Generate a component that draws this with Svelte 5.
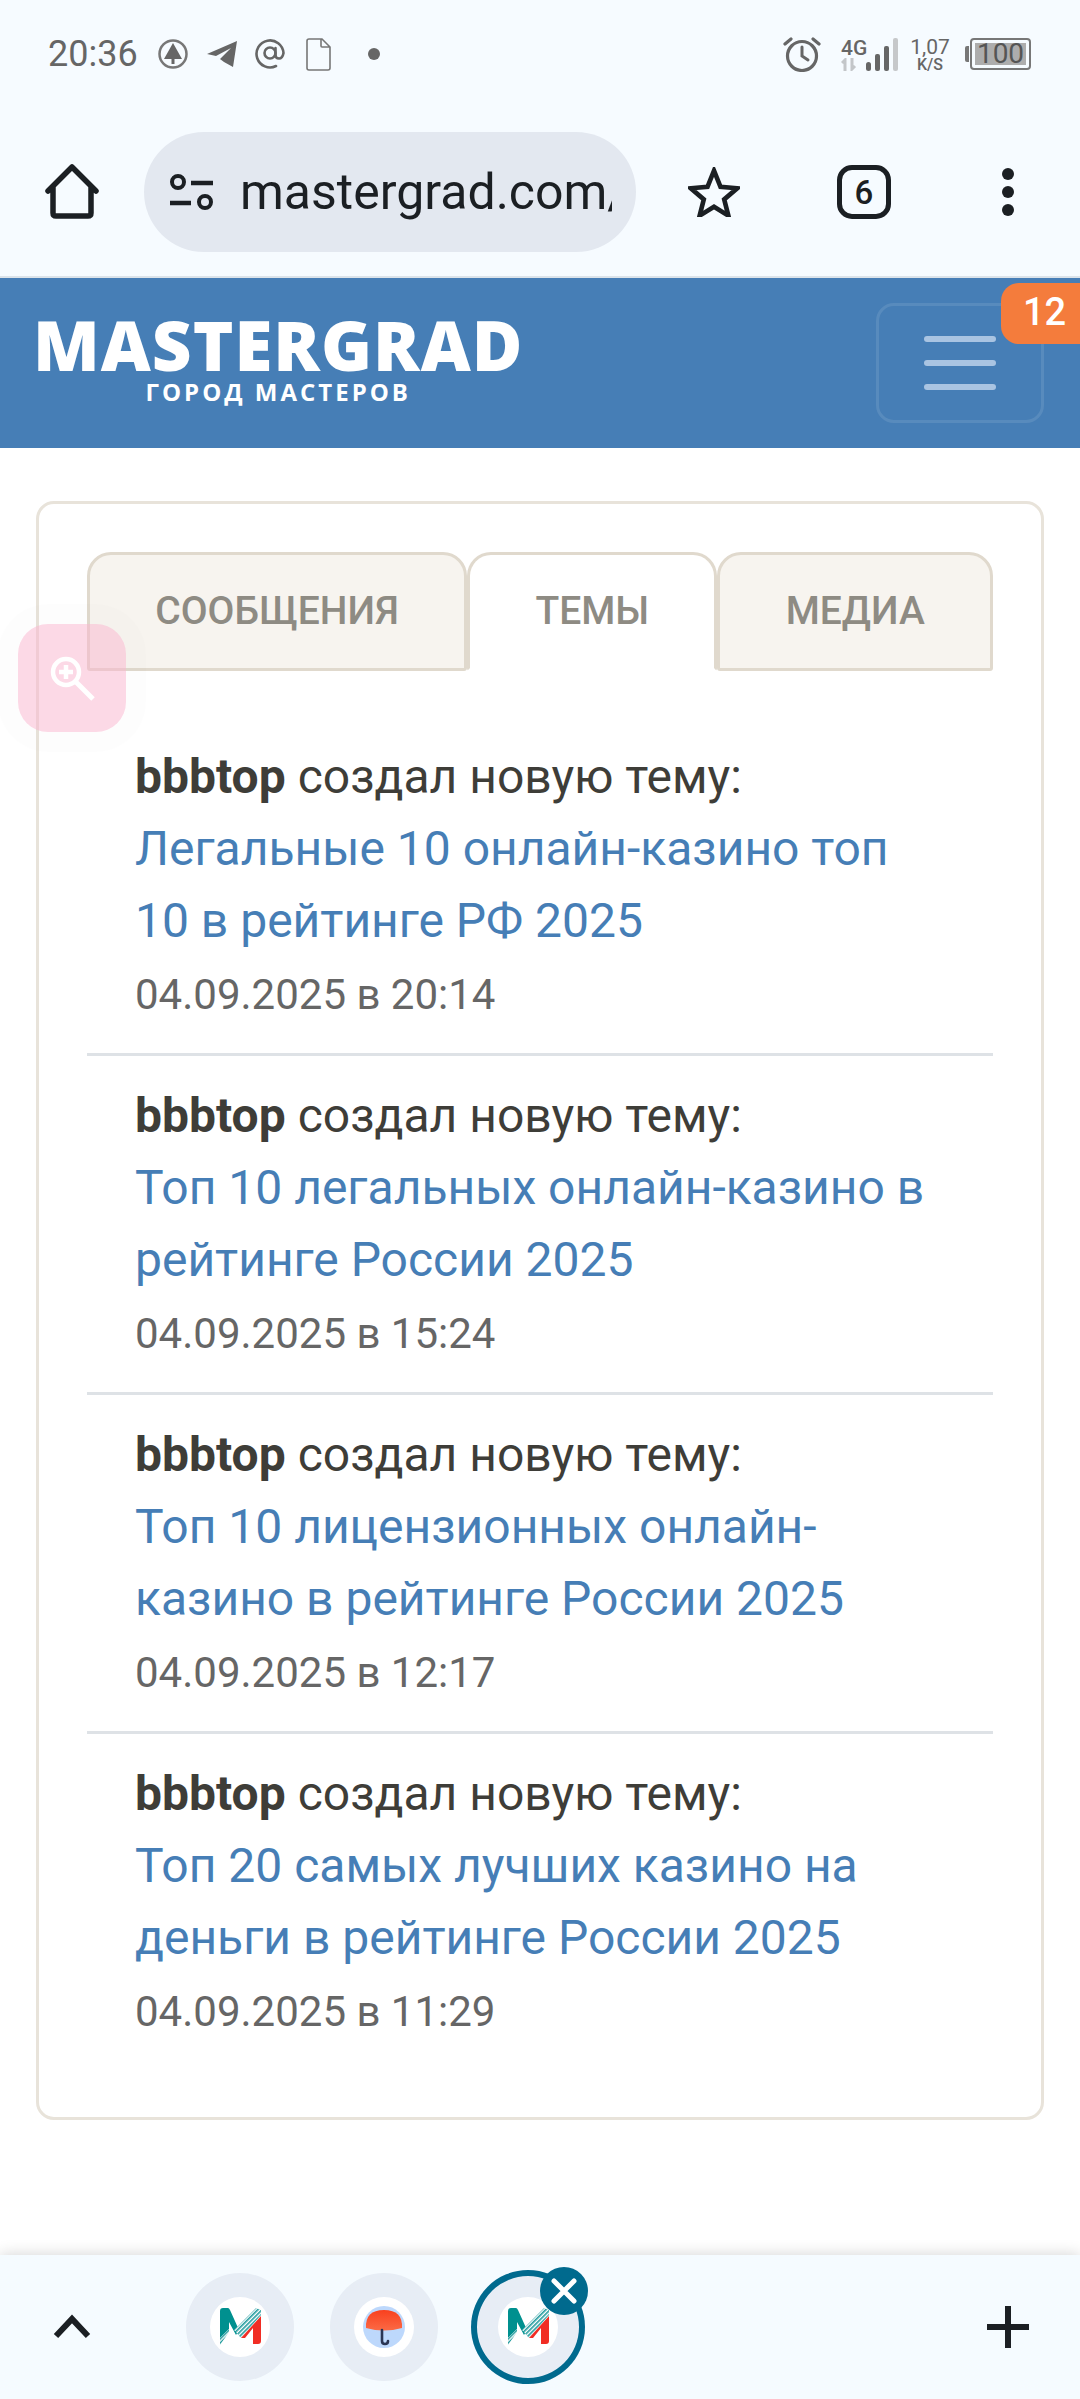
<script>
  const tabs = [
    { label: 'СООБЩЕНИЯ', active: false },
    { label: 'ТЕМЫ', active: true },
    { label: 'МЕДИА', active: false }
  ];

  const topics = [
    { title: 'Легальные 10 онлайн-казино топ 10 в рейтинге РФ 2025', date: '04.09.2025 в 20:14' },
    { title: 'Топ 10 легальных онлайн-казино в рейтинге России 2025', date: '04.09.2025 в 15:24' },
    { title: 'Топ 10 лицензионных онлайн-казино в рейтинге России 2025', date: '04.09.2025 в 12:17' },
    { title: 'Топ 20 самых лучших казино на деньги в рейтинге России 2025', date: '04.09.2025 в 11:29' }
  ];
</script>

{#snippet mLogo()}
  <svg class="favicon" viewBox="0 0 60 60">
    <defs>
      <pattern id="hatch" width="3" height="3" patternUnits="userSpaceOnUse" patternTransform="rotate(-45)">
        <rect width="3" height="3" fill="#fff" />
        <rect width="3" height="1.6" fill="#1f9a9c" />
      </pattern>
    </defs>
    <path d="M10 14q0-3 3-3h5q1 0 2 2l9 20-3 5-7-13v7l-9 9z" fill="#00908f" />
    <path d="M10 41l9-9v3l-9 13z" fill="url(#hatch)" />
    <path d="M24 33L46 11l5 2v5L31 41z" fill="url(#hatch)" />
    <path d="M31 41l20-22v25q0 3-3 3h-5V31l-8 10z" fill="#f12d24" />
  </svg>
{/snippet}

<div class="page">
  <header class="chrome">
    <div class="status">
      <span class="time">20:36</span>
      <svg class="st" width="30" height="30" viewBox="0 0 30 30">
        <circle cx="15" cy="15" r="13.5" fill="none" stroke="#777" stroke-width="2.5" />
        <path d="M15 4l9 16h-7.5v5h-3v-5H6z" fill="#666" />
      </svg>
      <svg class="st plane" width="32" height="28" viewBox="0 0 32 28">
        <path d="M1 14L31 1l-4 26-9-5-4-3 11-11-15 8z" fill="#666" />
      </svg>
      <svg class="st at" width="32" height="32" viewBox="0 0 32 32">
        <circle cx="16" cy="15" r="5.5" fill="none" stroke="#666" stroke-width="2.6" />
        <path d="M21.5 10v7q0 3.500 3.500 3.500t4.500-5.500A13.500 13.500 0 1 0 22 28" fill="none" stroke="#666" stroke-width="2.6" stroke-linecap="round" />
      </svg>
      <svg class="st doc" width="26" height="33" viewBox="0 0 26 33">
        <path d="M2 3q0-2 2-2h13l8 8v21q0 2-2 2H4q-2 0-2-2zM16 1v7q0 1 1 1h8" fill="none" stroke="#777" stroke-width="1.6" />
      </svg>
      <span class="dot"></span>

      <div class="st-right">
        <svg width="38" height="36" viewBox="0 0 38 36">
          <circle cx="19" cy="20" r="14.500" fill="none" stroke="#666" stroke-width="3.200" />
          <path d="M19 11v9l6 4" fill="none" stroke="#666" stroke-width="3" stroke-linecap="round" />
          <path d="M2 8l6-5M36 8l-6-5" stroke="#666" stroke-width="3.200" stroke-linecap="round" />
        </svg>
        <div class="net">
          <span class="net-top">4G</span>
          <svg width="16" height="13" viewBox="0 0 16 13">
            <path d="M4 13V2L1 5M11 0v11l3-3" fill="none" stroke="#c3c6c9" stroke-width="3" />
          </svg>
        </div>
        <svg class="bars" width="33" height="33" viewBox="0 0 33 33">
          <rect x="0" y="24" width="5" height="9" rx="2.500" fill="#666" />
          <rect x="9" y="16" width="5" height="17" rx="2" fill="#666" />
          <rect x="18" y="8" width="5" height="25" rx="2" fill="#666" />
          <rect x="27" y="0" width="5" height="33" rx="2" fill="#c6c8ca" />
        </svg>
        <div class="speed">
          <span class="speed-n">1,07</span>
          <span class="speed-u">K/S</span>
        </div>
        <div class="battery">
          <span class="batt-cap"></span>
          <span class="batt-body"><span class="batt-fill">100</span></span>
        </div>
      </div>
    </div>

    <div class="toolbar">
      <button class="tool home" aria-label="Домой">
        <svg width="56" height="58" viewBox="0 0 56 58">
          <path d="M4 28L28 4l24 24M9 24v26q0 3 3 3h32q3 0 3-3V24" fill="none" stroke="#1b1f23" stroke-width="5.500" stroke-linecap="round" stroke-linejoin="round" />
        </svg>
      </button>
      <div class="url">
        <svg width="46" height="36" viewBox="0 0 46 36">
          <circle cx="9" cy="8" r="6" fill="none" stroke="#1b1f23" stroke-width="4" />
          <path d="M22 9h22M1 29h21" stroke="#1b1f23" stroke-width="4.500" />
          <circle cx="36" cy="28" r="6" fill="none" stroke="#1b1f23" stroke-width="4" />
        </svg>
        <span class="url-text">mastergrad.com/forums/</span>
      </div>
      <button class="tool star" aria-label="В закладки">
        <svg width="52" height="50" viewBox="0 0 56 54">
          <path d="M28 4l7 17.500 18 1.500-14 12 4.500 17.500L28 43 12.500 52.500 17 35 3 23l18-1.500z" fill="none" stroke="#1b1f23" stroke-width="5" />
        </svg>
      </button>
      <button class="tool" aria-label="Вкладки">
        <span class="tab-count">6</span>
      </button>
      <button class="tool dots" aria-label="Меню">
        <i></i><i></i><i></i>
      </button>
    </div>
  </header>

  <div class="site-head">
    <div class="logo">
      <span class="logo-main">MASTERGRAD</span>
      <span class="logo-sub">ГОРОД МАСТЕРОВ</span>
    </div>
    <button class="burger" aria-label="Меню сайта">
      <i></i><i></i><i></i>
    </button>
    <span class="badge">12</span>
  </div>

  <main class="content">
    <section class="card">
      <div class="tabs">
        {#each tabs as tab}
          <button class="tab" class:active={tab.active}>{tab.label}</button>
        {/each}
      </div>
      <ul class="topics">
        {#each topics as topic}
          <li class="topic">
            <div><b>bbbtop</b> создал новую тему:</div>
            <a href="#top">{topic.title}</a>
            <div class="date">{topic.date}</div>
          </li>
        {/each}
      </ul>
    </section>
  </main>

  <div class="zoom-btn">
    <svg width="54" height="54" viewBox="0 0 54 54">
      <circle cx="19" cy="19" r="13" fill="none" stroke="#fff" stroke-width="4.500" />
      <path d="M19 12v14M12 19h14" stroke="#fff" stroke-width="4.500" />
      <path d="M29 29l17 17" stroke="#fff" stroke-width="5" />
    </svg>
  </div>

  <footer class="tabbar">
    <button class="chev" aria-label="Развернуть">
      <svg width="38" height="26" viewBox="0 0 38 26">
        <path d="M3 22L19 5l16 17" fill="none" stroke="#1b1f23" stroke-width="6" />
      </svg>
    </button>
    <div class="group">
      <div class="ring"><div class="fav">{@render mLogo()}</div></div>
      <div class="ring">
        <div class="fav">
          <svg class="favicon" viewBox="0 0 60 60">
            <defs>
              <linearGradient id="dome" x1="0" y1="0" x2="0" y2="1">
                <stop offset="0" stop-color="#f9401e" />
                <stop offset="1" stop-color="#fb6a45" />
              </linearGradient>
            </defs>
            <circle cx="30" cy="30" r="21" fill="#bdd8fc" />
            <path d="M12 31Q11 13 30 13T48 31Q30 36 12 31z" fill="url(#dome)" />
            <path d="M28 33v11q0 3 3 3t3-3" fill="none" stroke="#2a3554" stroke-width="2.600" stroke-linecap="round" />
          </svg>
        </div>
      </div>
      <div class="ring current">
        <div class="fav">{@render mLogo()}</div>
        <span class="close">
          <svg width="28" height="28" viewBox="0 0 28 28">
            <path d="M4 4l20 20M24 4L4 24" stroke="#fff" stroke-width="5" stroke-linecap="round" />
          </svg>
        </span>
      </div>
    </div>
    <button class="plus" aria-label="Новая вкладка">
      <svg width="42" height="42" viewBox="0 0 42 42">
        <path d="M21 0v42M0 21h42" stroke="#1b1f23" stroke-width="6" />
      </svg>
    </button>
  </footer>
</div>

<style>
  :global(body) {
    margin: 0;
    background: #fff;
  }

  .page {
    position: relative;
    width: 1080px;
    height: 2399px;
    display: flex;
    flex-direction: column;
    overflow: hidden;
    font-family: Roboto, sans-serif;
  }

  button {
    border: 0;
    background: none;
    padding: 0;
    font-family: inherit;
  }

  /* browser chrome */
  .chrome {
    height: 278px;
    background: #f6fbff;
    border-bottom: 2px solid #dbe3ea;
    box-sizing: border-box;
  }

  .status {
    height: 132px;
    padding: 0 49px 24px 48px;
    box-sizing: border-box;
    display: flex;
    align-items: center;
    color: #666;
  }

  .time {
    font-size: 36px;
    width: 110px;
  }

  .st {
    flex: none;
  }

  .plane {
    margin-left: 18px;
  }

  .at {
    margin-left: 16px;
  }

  .doc {
    margin-left: 19px;
  }

  .dot {
    width: 12px;
    height: 12px;
    margin-left: 37px;
    border-radius: 50%;
    background: #666;
  }

  .st-right {
    margin-left: auto;
    display: flex;
    align-items: center;
  }

  .net {
    width: 25px;
    margin-left: 20px;
    display: flex;
    flex-direction: column;
  }

  .net-top {
    font-size: 21px;
    font-weight: 500;
    line-height: 20px;
  }

  .bars {
    margin: 0;
  }

  .speed {
    width: 38px;
    margin-left: 12px;
    display: flex;
    flex-direction: column;
    align-items: center;
    color: #666;
  }

  .speed-n {
    font-size: 21px;
    line-height: 20px;
  }

  .speed-u {
    font-size: 16px;
    line-height: 15px;
    font-weight: 500;
  }

  .battery {
    margin-left: 16px;
    display: flex;
    align-items: center;
  }

  .batt-cap {
    width: 4px;
    height: 16px;
    background: #777;
    border-radius: 2px 0 0 2px;
  }

  .batt-body {
    width: 61px;
    height: 32px;
    margin-left: 1px;
    border: 2px solid #777;
    border-radius: 4px;
    box-sizing: border-box;
    padding: 3px;
    display: flex;
  }

  .batt-fill {
    flex: 1;
    background: #adadad;
    color: #555;
    font-size: 28px;
    line-height: 22px;
    text-align: center;
  }

  .toolbar {
    height: 120px;
    display: flex;
    align-items: center;
  }

  .tool {
    width: 144px;
    height: 120px;
    flex: none;
    display: flex;
    align-items: center;
    justify-content: center;
  }

  .tool.star {
    width: 156px;
  }

  .url {
    width: 492px;
    height: 120px;
    flex: none;
    box-sizing: border-box;
    padding: 0 24px 0 25px;
    border-radius: 60px;
    background: #e3e8f0;
    display: flex;
    align-items: center;
    gap: 25px;
    overflow: hidden;
  }

  .url svg {
    flex: none;
  }

  .url-text {
    font-size: 50px;
    color: #1b1f23;
    white-space: nowrap;
    overflow: hidden;
  }

  .tab-count {
    width: 54px;
    height: 54px;
    box-sizing: border-box;
    border: 5.500px solid #1b1f23;
    border-radius: 15px;
    display: flex;
    align-items: center;
    justify-content: center;
    color: #1b1f23;
    font-size: 33px;
    font-weight: 500;
  }

  .dots {
    flex-direction: column;
    gap: 6px;
  }

  .dots i {
    width: 12px;
    height: 12px;
    border-radius: 50%;
    background: #1b1f23;
  }

  /* site header */
  .site-head {
    position: relative;
    height: 170px;
    background: #467eb6;
    display: flex;
    align-items: center;
    justify-content: space-between;
    padding: 0 36px 0 33px;
    box-sizing: border-box;
  }

  .logo {
    display: flex;
    flex-direction: column;
    align-items: center;
    color: #fff;
    font-family: 'Open Sans', sans-serif;
    margin-bottom: 10px;
  }

  .logo-main {
    font-size: 69px;
    font-weight: 800;
    line-height: 66px;
    letter-spacing: 1px;
  }

  .logo-sub {
    font-size: 24px;
    font-weight: 700;
    line-height: 29px;
    letter-spacing: 3px;
  }

  .burger {
    width: 168px;
    height: 120px;
    box-sizing: border-box;
    border: 3px solid rgba(255, 255, 255, 0.1);
    border-radius: 18px;
    display: flex;
    flex-direction: column;
    align-items: center;
    justify-content: center;
    gap: 18px;
  }

  .burger i {
    width: 72px;
    height: 6px;
    border-radius: 3px;
    background: #a9c4e2;
  }

  .badge {
    position: absolute;
    right: -20px;
    top: 5px;
    width: 99px;
    height: 61px;
    box-sizing: border-box;
    padding-left: 22px;
    border-radius: 18px;
    background: #f47c3c;
    color: #fff;
    font-size: 38px;
    font-weight: 500;
    line-height: 58px;
  }

  /* content */
  .content {
    flex: 1;
    padding: 53px 36px 0;
  }

  .card {
    border: 3px solid #e8e3da;
    border-radius: 18px;
    padding: 48px;
    height: 1619px;
    box-sizing: border-box;
  }

  .tabs {
    display: flex;
  }

  .tab {
    flex: 1 0 auto;
    height: 119px;
    padding: 0 65px 1px;
    box-sizing: border-box;
    border: 3px solid #e0d9cd;
    border-radius: 24px 24px 3px 3px;
    background: #f7f4ef;
    color: #8e8b83;
    font-size: 39px;
    font-weight: 500;
    white-space: nowrap;
  }

  .tab.active {
    background: #fff;
    border-bottom-color: transparent;
  }

  .topics {
    list-style: none;
    margin: 46px 0 0;
    padding: 0;
    color: #3e3d38;
    font-size: 48px;
    line-height: 72px;
  }

  .topic {
    padding: 24px 48px 24px;
    border-bottom: 3px solid #dee2e6;
  }

  .topic:last-child {
    border-bottom: 0;
  }

  .topic b {
    font-weight: 700;
  }

  .topic a {
    display: block;
    color: #467eb6;
    text-decoration: none;
  }

  .date {
    padding-top: 2px;
    margin-bottom: -2px;
    font-size: 42px;
    color: #666;
  }

  .zoom-btn {
    position: absolute;
    left: 18px;
    top: 624px;
    width: 108px;
    height: 108px;
    border-radius: 30px;
    background: rgba(250, 180, 205, 0.5);
    box-shadow: 0 0 0 20px rgba(0, 0, 0, 0.006);
    display: flex;
    align-items: center;
    justify-content: center;
  }

  .zoom-btn svg {
    margin: 3px 0 0 3px;
  }

  /* bottom tab strip */
  .tabbar {
    height: 144px;
    flex: none;
    background: #f5fbff;
    box-shadow: 0 -1px 14px rgba(0, 0, 0, 0.16);
    display: flex;
    align-items: center;
    position: relative;
  }

  .chev {
    width: 144px;
    display: flex;
    justify-content: center;
  }

  .group {
    display: flex;
    align-items: center;
    gap: 36px;
    margin-left: 42px;
  }

  .ring {
    position: relative;
    width: 108px;
    height: 108px;
    border-radius: 50%;
    background: #e7edf5;
    display: flex;
    align-items: center;
    justify-content: center;
  }

  .ring.current {
    width: 114px;
    height: 114px;
    box-shadow: inset 0 0 0 6px #006a8e;
    margin-left: -3px;
  }

  .fav {
    width: 60px;
    height: 60px;
    border-radius: 50%;
    background: #fff;
  }

  .favicon {
    display: block;
    width: 60px;
    height: 60px;
  }

  .close {
    position: absolute;
    right: -3px;
    top: -3px;
    width: 48px;
    height: 48px;
    border-radius: 50%;
    background: #006a8e;
    display: flex;
    align-items: center;
    justify-content: center;
  }

  .plus {
    margin-left: auto;
    margin-right: 51px;
    display: flex;
  }
</style>
